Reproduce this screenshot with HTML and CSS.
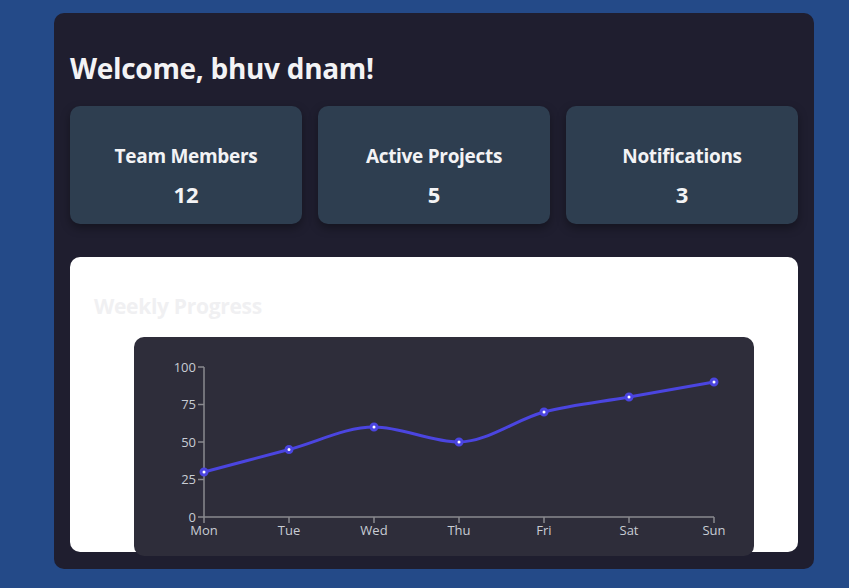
FILE: index.html
```html
<!DOCTYPE html>
<html>
<head>
<meta charset="utf-8">
<link rel="stylesheet" href="styles.css">
</head>
<body>
<div class="page">
  <main class="dash">
    <h1 class="welcome">Welcome, bhuv dnam!</h1>
    <div class="cards">
      <div class="card"><h3 class="card-title">Team Members</h3><p class="card-num">12</p></div>
      <div class="card"><h3 class="card-title">Active Projects</h3><p class="card-num">5</p></div>
      <div class="card"><h3 class="card-title">Notifications</h3><p class="card-num">3</p></div>
    </div>
    <section class="panel">
      <h2 class="panel-title">Weekly Progress</h2>
      <div class="chart">
        <svg width="620" height="219" viewBox="0 0 620 219">
          <g class="axis" stroke="#8a8a8f" stroke-width="1.5" fill="none">
            <line x1="70" y1="30" x2="70" y2="180"/>
            <line x1="70" y1="180" x2="580" y2="180"/>
            <line x1="64" y1="30" x2="70" y2="30"/>
            <line x1="64" y1="67.5" x2="70" y2="67.5"/>
            <line x1="64" y1="105" x2="70" y2="105"/>
            <line x1="64" y1="142.5" x2="70" y2="142.5"/>
            <line x1="64" y1="180" x2="70" y2="180"/>
            <line x1="70" y1="180" x2="70" y2="186"/>
            <line x1="155" y1="180" x2="155" y2="186"/>
            <line x1="240" y1="180" x2="240" y2="186"/>
            <line x1="325" y1="180" x2="325" y2="186"/>
            <line x1="410" y1="180" x2="410" y2="186"/>
            <line x1="495" y1="180" x2="495" y2="186"/>
            <line x1="580" y1="180" x2="580" y2="186"/>
          </g>
          <g class="ylabels" text-anchor="end">
            <text x="62" y="34.5">100</text>
            <text x="62" y="72">75</text>
            <text x="62" y="109.5">50</text>
            <text x="62" y="147">25</text>
            <text x="62" y="184.5">0</text>
          </g>
          <g class="xlabels" text-anchor="middle">
            <text x="70" y="198">Mon</text>
            <text x="155" y="198">Tue</text>
            <text x="240" y="198">Wed</text>
            <text x="325" y="198">Thu</text>
            <text x="410" y="198">Fri</text>
            <text x="495" y="198">Sat</text>
            <text x="580" y="198">Sun</text>
          </g>
          <path d="M70,135 C98.33,127.5 126.67,120 155,112.5 C183.33,105 211.67,90 240,90 C268.33,90 296.67,105 325,105 C353.33,105 381.67,82.5 410,75 C438.33,67.5 466.67,65 495,60 C523.33,55 551.67,50 580,45" fill="none" stroke="#4b45e0" stroke-width="3"/>
          <g fill="#ffffff" stroke="#4b45e0" stroke-width="3">
            <circle cx="70" cy="135" r="3"/>
            <circle cx="155" cy="112.5" r="3"/>
            <circle cx="240" cy="90" r="3"/>
            <circle cx="325" cy="105" r="3"/>
            <circle cx="410" cy="75" r="3"/>
            <circle cx="495" cy="60" r="3"/>
            <circle cx="580" cy="45" r="3"/>
          </g>
        </svg>
      </div>
    </section>
  </main>
</div>
</body>
</html>
```

FILE: styles.css
```css
* { box-sizing: border-box; }
html, body { margin: 0; padding: 0; }
body {
  background: #244a88;
  font-family: "Open Sans", "Noto Sans", sans-serif;
  width: 849px;
  height: 588px;
  overflow: hidden;
}
.page {
  padding: 13px 35px 0 54px;
}
.dash {
  width: 760px;
  height: 556px;
  background: #1f1e2f;
  border-radius: 10px;
  padding: 16px;
}
.welcome {
  margin: 22px 0 21px;
  font-size: 28px;
  line-height: 34px;
  font-weight: 700;
  color: #f3f3f5;
  letter-spacing: -0.3px;
}
.cards {
  display: flex;
  gap: 16px;
}
.card {
  flex: 1;
  height: 118px;
  background: #2e3e50;
  border-radius: 10px;
  box-shadow: 0 4px 10px rgba(0,0,0,0.35);
  display: flex;
  flex-direction: column;
  align-items: center;
  justify-content: center;
  color: #f3f3f5;
  padding-top: 22px;
}
.card-title {
  margin: 0;
  font-size: 19px;
  line-height: 24px;
  font-weight: 700;
  letter-spacing: -0.3px;
}
.card-num {
  margin: 12px 0 0;
  font-size: 22px;
  line-height: 28px;
  font-weight: 700;
}
.panel {
  margin-top: 33px;
  height: 295px;
  background: #ffffff;
  border-radius: 10px;
  padding: 24px 24px 0;
}
.panel-title {
  margin: 12px 0 0;
  font-size: 21px;
  line-height: 26px;
  font-weight: 700;
  color: #f0f0f2;
  letter-spacing: -0.3px;
}
.chart {
  margin: 18px 0 0 40px;
  width: 620px;
  height: 219px;
  background: #2e2d3a;
  border-radius: 10px;
}
.chart svg { display: block; }
.chart text {
  font-family: "Open Sans", "Noto Sans", sans-serif;
  font-size: 13px;
  fill: #c8ccd4;
}
```
